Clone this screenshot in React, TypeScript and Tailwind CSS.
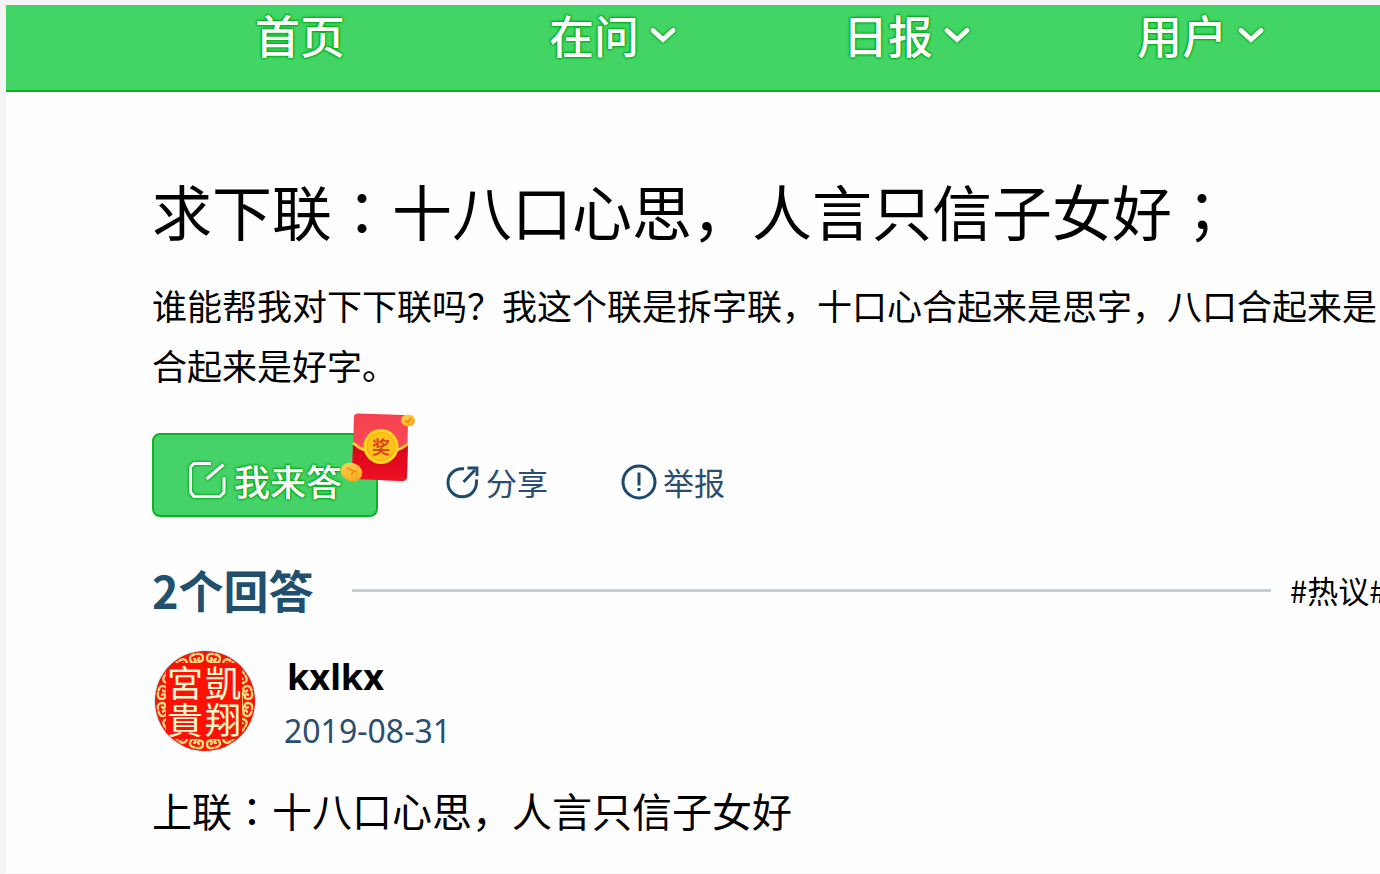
import React from "react";

const glow =
  "[text-shadow:0_0_1px_#00a010,0_0_2px_#00a818,0_0_2px_#00b010,0_0_3px_#00b41c,0_0_3px_#00b41c]";
const iconGlow =
  "[filter:drop-shadow(0_0_1px_#00a818)_drop-shadow(0_0_1px_#00b41c)]";

function Chevron() {
  return (
    <svg width="28" height="20" viewBox="0 0 28 20" fill="none" aria-hidden="true" className={iconGlow}>
      <path d="M4 5.500 L14 14.500 L24 5.500" stroke="#fff" strokeWidth="5" strokeLinecap="round" strokeLinejoin="miter" />
    </svg>
  );
}

/* Centred full-width punctuation */
function Mark({ children }: { children: React.ReactNode }) {
  return <span className="font-['Noto_Sans_CJK_TC',sans-serif]">{children}</span>;
}

function EditIcon() {
  return (
    <svg width="38" height="38" viewBox="0 0 38 38" fill="none" stroke="#fff" strokeWidth="3" aria-hidden="true" className={iconGlow}>
      <path d="M23 2.5 H6 L2.500 6 V31 L6 35.5 H32 L36 31.5 V16" strokeLinejoin="round" />
      <path d="M35.500 3.5 L18.500 18" strokeWidth="3.6" />
    </svg>
  );
}

function ShareIcon() {
  return (
    <svg width="34" height="34" viewBox="0 0 34 34" fill="none" stroke="#1c4a6e" strokeWidth="3" aria-hidden="true">
      <path d="M18 3.8 C8.5 2.8 2 9.5 2 17.4 C2 25.5 8.3 31.8 16.2 31.8 C24.2 31.8 30.500 25.5 30.500 17 V14.5" />
      <path d="M17.500 17 L29 5" strokeWidth="2.8" />
      <path d="M21.5 3 H31 V11" strokeWidth="2.8" />
    </svg>
  );
}

function ReportIcon() {
  return (
    <svg width="36" height="36" viewBox="0 0 36 36" fill="none" stroke="#1c4a6e" strokeWidth="3" aria-hidden="true">
      <circle cx="18" cy="18" r="16" />
      <path d="M18 8.5 V21.500" />
      <path d="M18 24 V27" />
    </svg>
  );
}

function RedPacket() {
  return (
    <svg width="78" height="76" viewBox="0 0 78 76" aria-hidden="true" className="absolute -top-[22px] left-[188px]">
      <defs>
        <linearGradient id="cover" x1="0" y1="0" x2="0" y2="1">
          <stop offset="0" stopColor="#f5404d" />
          <stop offset="1" stopColor="#ff5560" />
        </linearGradient>
        <linearGradient id="pocket" x1="0" y1="0" x2="0" y2="1">
          <stop offset="0" stopColor="#d8001c" />
          <stop offset="1" stopColor="#ee1223" />
        </linearGradient>
        <linearGradient id="coin" x1="0" y1="0" x2="1" y2="1">
          <stop offset="0" stopColor="#ffd84a" />
          <stop offset="1" stopColor="#f9a01c" />
        </linearGradient>
      </defs>
      <path d="M18 2.5 L64 4 Q68 4 68 8 L67 65 Q67 70 62 70 L16 68 Q12 68 12 64 L14 6 Q14 2.5 18 2.5Z" fill="url(#cover)" />
      <path d="M13 33 Q24 42 40 43 Q57 43 68 33 L67 65 Q67 70 62 70 L16 68 Q12 68 12 64Z" fill="url(#pocket)" />
      <path d="M13 32 Q24 42 40 42 Q57 42 68 33" fill="none" stroke="#ffcf3a" strokeWidth="2.6" />
      <circle cx="41" cy="35.500" r="17.500" fill="#ffd51f" />
      <circle cx="41" cy="35.500" r="14" fill="#ffc21a" stroke="#f4ab12" strokeWidth="1" />
      <text x="41" y="43" textAnchor="middle" fontSize="18" fontWeight="700" fill="#d9471a" fontFamily="Noto Sans CJK SC, sans-serif">奖</text>
      <ellipse cx="68" cy="9.500" rx="7" ry="6" fill="url(#coin)" />
      <path d="M65 10 L68 11 L71 7" fill="none" stroke="#e98510" strokeWidth="1.500" />
      <ellipse cx="11.500" cy="61" rx="11" ry="9" fill="url(#coin)" transform="rotate(20 11.500 61)" />
      <path d="M7 57 L14 60 L11 64 M14 60 L17 61" fill="none" stroke="#ef8c1c" strokeWidth="1.600" />
    </svg>
  );
}

function Seal() {
  const turns = Array.from({ length: 16 }, (_, i) => i * 22.5);
  return (
    <svg width="104" height="104" viewBox="0 0 104 104" aria-hidden="true" className="shrink-0">
      <defs>
        <clipPath id="disc">
          <circle cx="53" cy="51" r="50" />
        </clipPath>
      </defs>
      <circle cx="53" cy="51" r="50" fill="#fff" stroke="#c9f2f7" strokeWidth="2" />
      <g clipPath="url(#disc)">
        <rect width="104" height="104" fill="#fb1204" />
        <g fill="none" stroke="#ffdc80" strokeWidth="2.400" strokeLinecap="round" strokeLinejoin="round">
          {turns.map((a) => (
            <path key={a} transform={`rotate(${a} 53 51)`} d="M45 4 Q51 3 51 8 Q51 12 47 11 Q45 9 47 8 M61 4 Q55 3 55 8 Q55 12 59 11 Q61 9 59 8 M44 13 Q53 16 62 13" />
          ))}
        </g>
        <rect x="14" y="13" width="76" height="76" rx="3" fill="#fb1204" />
        <g fill="#fff6d0" fontFamily="Noto Sans CJK TC, sans-serif" fontSize="36" fontWeight="400" textAnchor="middle">
          <text x="33" y="47">宮</text>
          <text x="71" y="47">凱</text>
          <text x="33" y="84">貴</text>
          <text x="71" y="84">翔</text>
        </g>
      </g>
    </svg>
  );
}

const menu = [
  { label: "首页", more: false },
  { label: "在问", more: true },
  { label: "日报", more: true },
  { label: "用户", more: true },
];

export default function App() {
  return (
    <div className="flex min-h-screen flex-col overflow-hidden bg-[#f4f4f4] pt-[5px] pb-px pl-[6px] font-['Noto_Sans_CJK_SC',sans-serif] text-black">
      <header className="h-[87px] border-b-2 border-[#0cb01c] bg-[#42d566]">
        <nav className="flex pl-[249px] text-[45px] leading-[60px] font-medium text-white">
          {menu.map((m) => (
            <div key={m.label} className="w-[294px] shrink-0">
              <a href="#" className={`inline-flex items-center gap-[10px] ${glow}`}>
                {m.label}
                {m.more && <Chevron />}
              </a>
            </div>
          ))}
        </nav>
      </header>

      <main className="flex-1 bg-[#fefefe] pt-[78px] pl-[146px] whitespace-nowrap">
        <h1 className="text-[60px] leading-[80px]">
          求下联<Mark>：</Mark>十八口心思，人言只信子女好<Mark>；</Mark>
        </h1>
        <p className="mt-[25px] text-[35px] leading-[60px]">
          谁能帮我对下下联吗？我这个联是拆字联，十口心合起来是思字，八口合起来是
          <br />
          合起来是好字。
        </p>

        <div className="mt-[38px] flex h-[84px] items-stretch text-[31px] text-[#2a4d70]">
          <div className="relative mr-[68px]">
            <button
              type="button"
              className={`flex h-full w-[226px] items-center gap-2 rounded-lg border-2 border-[#0fb022] bg-[#45d268] pt-[10px] pl-[34px] text-[36px] font-medium text-white ${glow}`}
            >
              <EditIcon />
              我来答
            </button>
            <RedPacket />
          </div>
          <button type="button" className="mr-[73px] flex items-center gap-[6px] pt-[14px]">
            <ShareIcon />
            分享
          </button>
          <button type="button" className="flex items-center gap-[6px] pt-[14px]">
            <ReportIcon />
            举报
          </button>
        </div>

        <div className="mt-[43px] flex items-center leading-[60px]">
          <h2 className="text-[45px] font-bold text-[#21506f]">2个回答</h2>
          <div className="ml-[38px] h-[3px] flex-1 bg-[#c3cfd8]" />
          <a href="#" className="ml-[19px] w-[90px] overflow-hidden text-[31px]">
            #热议#
          </a>
        </div>

        <div className="mt-[30px] flex gap-[28px]">
          <Seal />
          <div className="font-['Noto_Sans',sans-serif] leading-[54px]">
            <div className="pl-[3px] text-[36px] font-bold">kxlkx</div>
            <div className="text-[32px] text-[#2a4d70]">2019-08-31</div>
          </div>
        </div>

        <p className="mt-[22px] text-[40px] leading-[60px]">
          上联<Mark>：</Mark>十八口心思，人言只信子女好
        </p>
      </main>
    </div>
  );
}
